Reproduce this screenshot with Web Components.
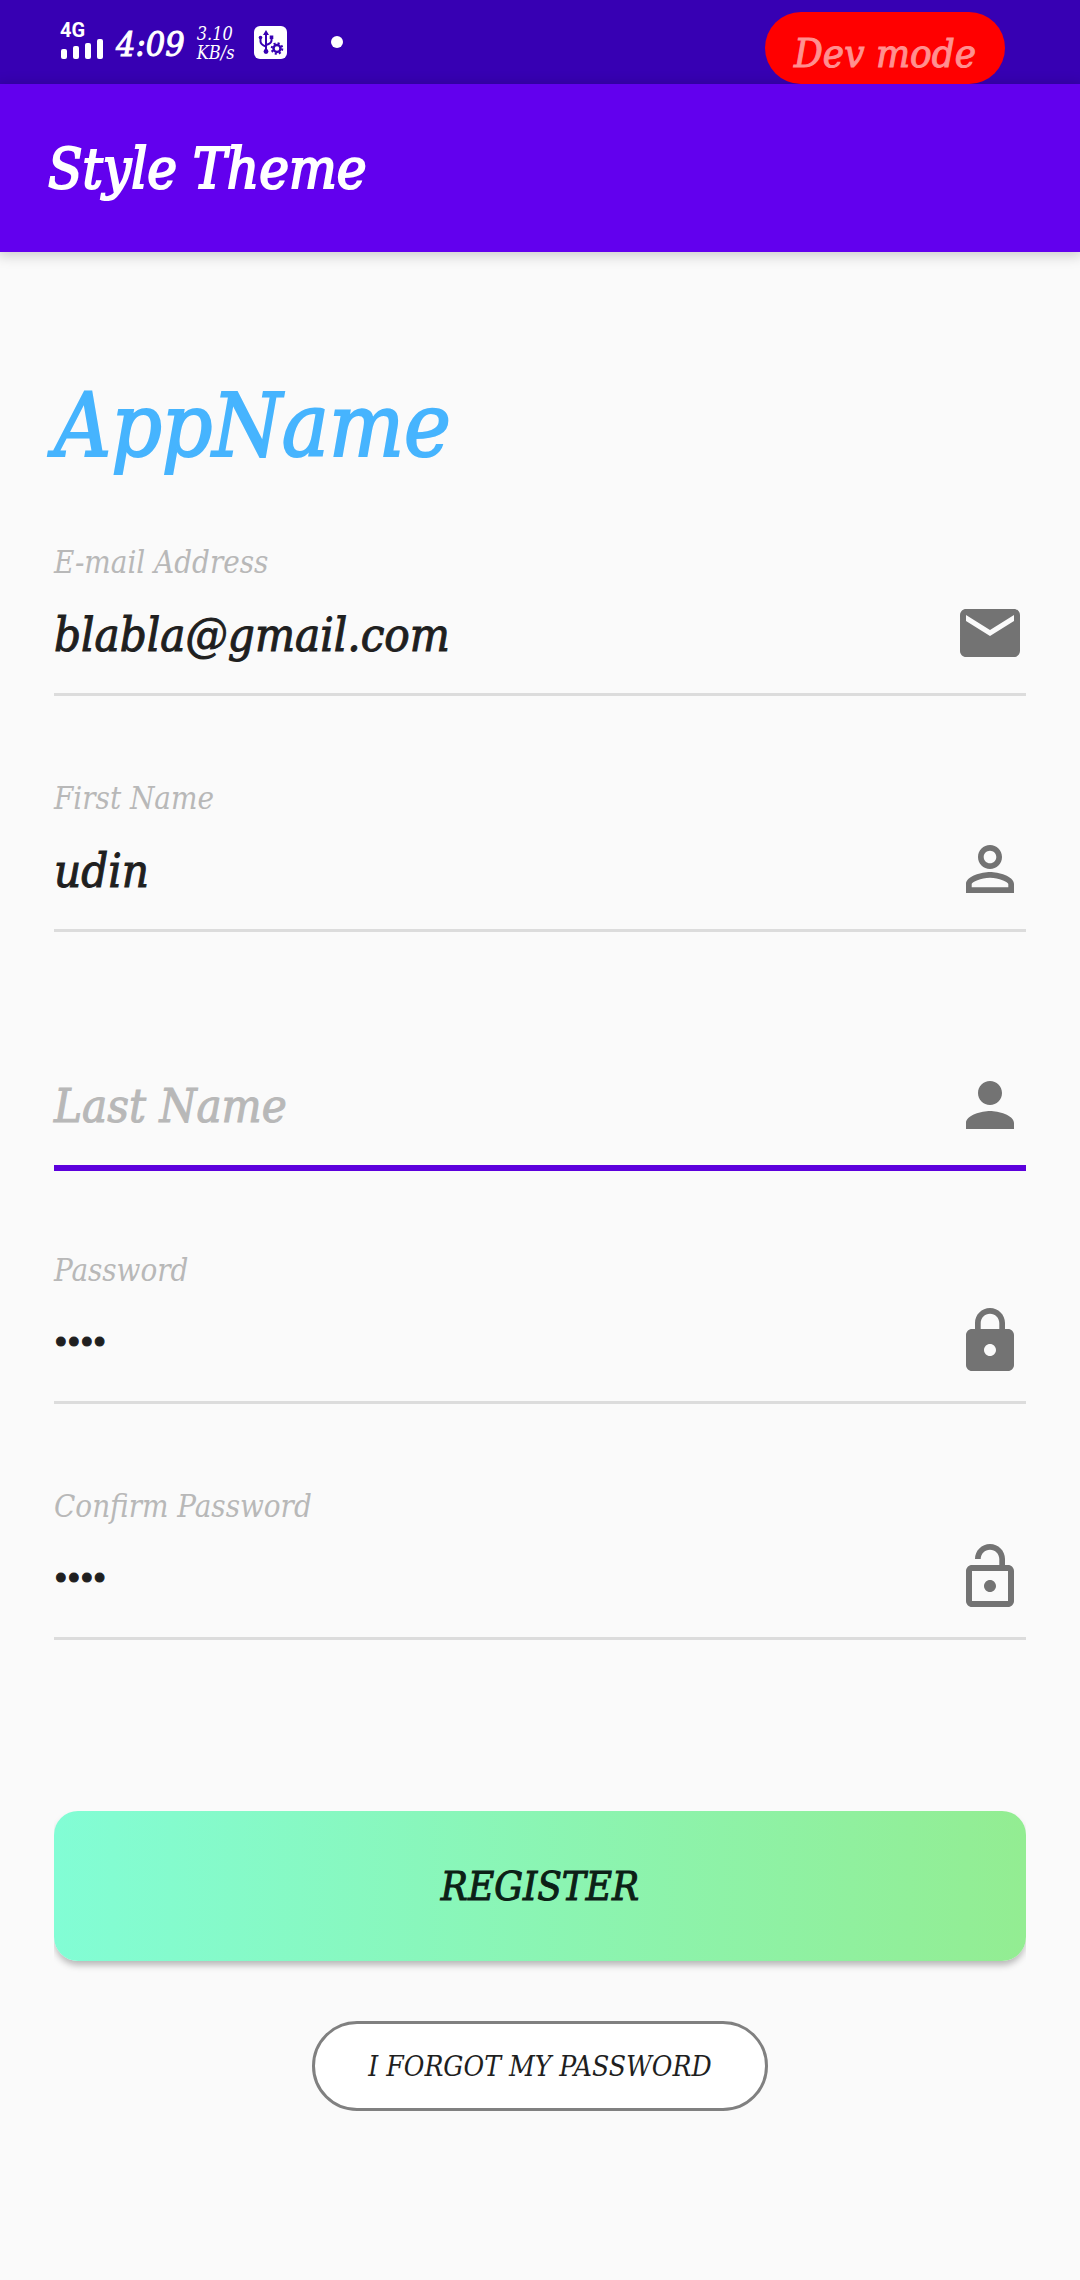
<!DOCTYPE html>
<html lang="en">
<head>
<meta charset="utf-8">
<meta name="viewport" content="width=device-width, initial-scale=1">
<title>Style Theme</title>
<style>
  body {
    margin: 0;
    min-height: 100vh;
    background: #fafafa;
    color: #1f1f1f;
    font-family: "DejaVu Serif Condensed", "DejaVu Serif", serif;
    font-style: italic;
  }
</style>
</head>
<body>
<status-bar time="4:09" rate="3.10" unit="KB/s"><dev-badge>Dev mode</dev-badge></status-bar>
<app-bar>Style Theme</app-bar>
<register-form heading="AppName">
  <text-field label="E-mail Address" type="email" value="blabla@gmail.com" icon="mail"></text-field>
  <text-field label="First Name" value="udin" icon="personOutline"></text-field>
  <text-field label="Last Name" icon="person" active></text-field>
  <text-field label="Password" type="password" value="••••" icon="lock"></text-field>
  <text-field label="Confirm Password" type="password" value="••••" icon="lockOpen"></text-field>
  <action-button slot="actions" variant="filled">REGISTER</action-button>
  <action-button slot="actions" variant="outlined">I FORGOT MY PASSWORD</action-button>
</register-form>

<script>
const ICONS = {
  mail: 'M20 4H4c-1.1 0-1.99.9-1.99 2L2 18c0 1.1.9 2 2 2h16c1.1 0 2-.9 2-2V6c0-1.1-.9-2-2-2zm0 4l-8 5-8-5V6l8 5 8-5v2z',
  personOutline: 'M12 5.9c1.16 0 2.1.94 2.1 2.1s-.94 2.1-2.1 2.1S9.9 9.16 9.9 8s.94-2.1 2.1-2.1m0 9c2.97 0 6.1 1.46 6.1 2.1v1.1H5.9V17c0-.64 3.13-2.1 6.1-2.1M12 4C9.79 4 8 5.79 8 8s1.79 4 4 4 4-1.79 4-4-1.79-4-4-4zm0 9c-2.67 0-8 1.34-8 4v3h16v-3c0-2.66-5.33-4-8-4z',
  person: 'M12 12c2.21 0 4-1.79 4-4s-1.79-4-4-4-4 1.79-4 4 1.79 4 4 4zm0 2c-2.67 0-8 1.34-8 4v2h16v-2c0-2.66-5.33-4-8-4z',
  lock: 'M18 8h-1V6c0-2.76-2.24-5-5-5S7 3.24 7 6v2H6c-1.1 0-2 .9-2 2v10c0 1.1.9 2 2 2h12c1.1 0 2-.9 2-2V10c0-1.1-.9-2-2-2zm-6 9c-1.1 0-2-.9-2-2s.9-2 2-2 2 .9 2 2-.9 2-2 2zm3.1-9H8.9V6c0-1.71 1.39-3.1 3.1-3.1 1.71 0 3.1 1.39 3.1 3.1v2z',
  lockOpen: 'M12 17c1.1 0 2-.9 2-2s-.9-2-2-2-2 .9-2 2 .9 2 2 2zm6-9h-1V6c0-2.76-2.24-5-5-5S7 3.24 7 6h1.9c0-1.71 1.39-3.1 3.1-3.1 1.71 0 3.1 1.39 3.1 3.1v2H6c-1.1 0-2 .9-2 2v10c0 1.1.9 2 2 2h12c1.1 0 2-.9 2-2V10c0-1.1-.9-2-2-2zm0 12H6V10h12v10z'
};

class BaseElement extends HTMLElement {
  connectedCallback() {
    if (this.shadowRoot) return;
    this.attachShadow({ mode: 'open' }).innerHTML = this.render();
  }
  attr(name) { return this.getAttribute(name) || ''; }
}

class StatusBar extends BaseElement {
  render() {
    return `
      <style>
        :host { display: flex; justify-content: space-between; height: 84px; padding: 0 75px 0 60px; background: #3700b3; color: #fff; }
        .left { display: flex; align-items: center; }
        .network { display: flex; flex-direction: column; width: 44px; height: 40px; }
        .gen { font: bold 20px/16px Roboto, sans-serif; }
        .network svg { display: block; margin-top: 1px; }
        .time { margin-left: 12px; padding-top: 4px; font-size: 34px; line-height: 60px; -webkit-text-stroke: 1px; }
        .rate { display: grid; margin-left: 12px; padding-top: 2px; font-size: 18px; line-height: 19px; }
        .usb { margin-left: 20px; }
        .dot { width: 12px; height: 12px; margin-left: 44px; border-radius: 50%; background: #fff; }
      </style>
      <div class="left">
        <div class="network">
          <span class="gen">4G</span>
          <svg width="44" height="22" fill="#fff" aria-hidden="true">
            <rect x="1" y="10" width="6" height="10" rx="2"/><rect x="13" y="7" width="6" height="13" rx="2"/>
            <rect x="25" y="4" width="6" height="16" rx="2"/><rect x="37" y="0" width="6" height="20" rx="2"/>
          </svg>
        </div>
        <span class="time">${this.attr('time')}</span>
        <div class="rate"><span>${this.attr('rate')}</span><span>${this.attr('unit')}</span></div>
        <svg class="usb" width="33" height="33" viewBox="0 0 33 33" aria-hidden="true">
          <rect width="33" height="33" rx="6" fill="#fff"/>
          <g fill="none" stroke="#3700b3" stroke-width="2">
            <path d="M12 8v17M6.500 11v4.500q0 3 5.500 5M17.500 11v3.500q0 3-5.500 4.500"/>
            <circle cx="23" cy="22.500" r="3.500" stroke-width="2.500"/>
            <circle cx="23" cy="22.500" r="5.300" stroke-width="2" stroke-dasharray="2.080 2.080"/>
          </g>
          <g fill="#3700b3"><path d="M12 4l3 5H9z"/><circle cx="12" cy="25.500" r="2.400"/><circle cx="6.500" cy="11.500" r="1.800"/><path d="M15.700 9.500h3.600v3.600h-3.600z"/></g>
        </svg>
        <span class="dot"></span>
      </div>
      <slot></slot>`;
  }
}

class DevBadge extends BaseElement {
  render() {
    return `
      <style>
        :host { display: block; box-sizing: border-box; height: 72px; margin-top: 12px; padding: 10px 29px 0; border-radius: 36px; background: #f00; color: #ff9090; font-size: 40px; line-height: 62px; white-space: nowrap; -webkit-text-stroke: 1px; }
      </style>
      <slot></slot>`;
  }
}

class AppBar extends BaseElement {
  render() {
    return `
      <style>
        :host { display: flex; align-items: center; height: 168px; padding: 0 48px; background: #6200ee; color: #fff; box-shadow: 0 2px 12px 2px rgba(0, 0, 0, .18); }
        h1 { margin: 0; padding-top: 2px; font-size: 56px; font-weight: 400; line-height: 72px; -webkit-text-stroke: 2px; }
      </style>
      <h1><slot></slot></h1>`;
  }
}

class RegisterForm extends BaseElement {
  render() {
    return `
      <style>
        :host { display: block; padding: 116px 54px; }
        h2 { margin: 0 0 58px; color: #46b4fe; font-size: 88px; font-weight: 400; line-height: 116px; -webkit-text-stroke: 2px; }
        .fields { display: grid; gap: 82px; }
        .actions { display: flex; flex-direction: column; align-items: center; gap: 60px; margin-top: 171px; }
      </style>
      <h2>${this.attr('heading')}</h2>
      <form onsubmit="return false">
        <div class="fields"><slot></slot></div>
        <div class="actions"><slot name="actions"></slot></div>
      </form>`;
  }
}

class TextField extends BaseElement {
  render() {
    const type = this.attr('type') || 'text';
    const value = this.attr('value');
    return `
      <style>
        :host { display: grid; grid-template-columns: 1fr 72px; grid-template-rows: 40px 72px; row-gap: 15px; padding-bottom: 24px; border-bottom: 3px solid #dcdcdc; }
        :host([active]) { border-color: #5c00dc; box-shadow: 0 3px #5c00dc; }
        label { grid-area: 1 / 1; color: #b8b8b8; font-size: 31px; line-height: 40px; }
        input { grid-area: 2 / 1; min-width: 0; padding: 2px 0 0; border: 0; outline: 0; background: none; color: inherit; font: inherit; font-size: 47px; -webkit-text-stroke: 1px; }
        input[type=password] { font-family: "Liberation Serif", serif; font-size: 37px; }
        label.resting { grid-area: 2 / 1; padding-top: 2px; font-size: 47px; line-height: 70px; pointer-events: none; -webkit-text-stroke: 1px; }
        svg { grid-area: 2 / 2; fill: #737373; }
      </style>
      <label for="control" class="${value ? 'floating' : 'resting'}">${this.attr('label')}</label>
      <input id="control" type="${type}" value="${value}" autocomplete="off" spellcheck="false">
      <svg width="72" height="72" viewBox="0 0 24 24" aria-hidden="true"><path d="${ICONS[this.attr('icon')]}"/></svg>`;
  }
}

class ActionButton extends BaseElement {
  render() {
    return `
      <style>
        :host { display: block; }
        :host([variant=filled]) { align-self: stretch; clip-path: inset(0 0 -20px); }
        button { display: block; box-sizing: border-box; margin: 0; color: inherit; font: inherit; cursor: pointer; }
        button.filled { width: 100%; height: 150px; border: 0; border-radius: 24px; background: linear-gradient(90deg, #82fdd5, #93ed92); box-shadow: 0 5px 7px -1px rgba(0, 0, 0, .28); color: #0c2016; font-size: 40px; -webkit-text-stroke: 1px; }
        button.outlined { height: 90px; padding: 0 53px; border: 3px solid #808080; border-radius: 45px; background: #fff; font-size: 28px; }
      </style>
      <button type="button" class="${this.attr('variant')}"><slot></slot></button>`;
  }
}

customElements.define('status-bar', StatusBar);
customElements.define('dev-badge', DevBadge);
customElements.define('app-bar', AppBar);
customElements.define('register-form', RegisterForm);
customElements.define('text-field', TextField);
customElements.define('action-button', ActionButton);
</script>
</body>
</html>
